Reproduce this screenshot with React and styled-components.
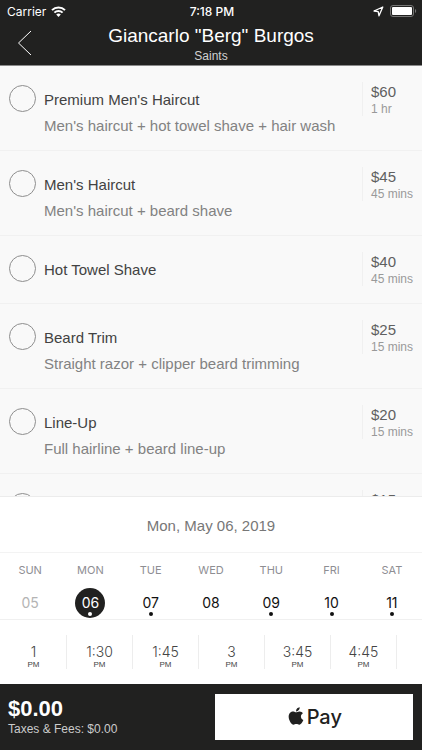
import React, { useState } from 'react';
import styled, { createGlobalStyle } from 'styled-components';
import { FaApple } from 'react-icons/fa';

const services = [
  { id: 'premium', name: "Premium Men's Haircut", about: "Men's haircut + hot towel shave + hair wash", price: 60, duration: '1 hr' },
  { id: 'mens', name: "Men's Haircut", about: "Men's haircut + beard shave", price: 45, duration: '45 mins' },
  { id: 'towel', name: 'Hot Towel Shave', price: 40, duration: '45 mins' },
  { id: 'beard', name: 'Beard Trim', about: 'Straight razor + clipper beard trimming', price: 25, duration: '15 mins' },
  { id: 'lineup', name: 'Line-Up', about: 'Full hairline + beard line-up', price: 20, duration: '15 mins' },
  { id: 'kids', name: "Kid's Haircut", price: 15, duration: '30 mins' },
];

const days = [
  { name: 'SUN', date: '05', past: true },
  { name: 'MON', date: '06', open: true },
  { name: 'TUE', date: '07', open: true },
  { name: 'WED', date: '08' },
  { name: 'THU', date: '09', open: true },
  { name: 'FRI', date: '10', open: true },
  { name: 'SAT', date: '11', open: true },
];

const times = ['1', '1:30', '1:45', '3', '3:45', '4:45', '6'];

const App = () => {
  const [selected, setSelected] = useState([]);
  const [day, setDay] = useState('06');
  const [time, setTime] = useState('');

  const toggle = (id) => {
    setSelected(selected.includes(id) ? selected.filter((s) => s !== id) : [...selected, id]);
  };

  const total = services
    .filter((s) => selected.includes(s.id))
    .reduce((sum, s) => sum + s.price, 0);
  const current = days.find((d) => d.date === day);
  const dayName = current.name[0] + current.name.slice(1).toLowerCase();

  return (
    <Screen>
      <GlobalStyle />
      <Header>
        <StatusBar>
          <Carrier>
            Carrier
            <WifiIcon />
          </Carrier>
          <Clock>7:18 PM</Clock>
          <Indicators>
            <LocationIcon />
            <BatteryIcon />
          </Indicators>
        </StatusBar>
        <NavBar>
          <BackButton type="button" aria-label="Back">
            <svg width="15" height="26" viewBox="0 0 15 26" fill="none" stroke="#fff">
              <path d="M14 1 L1.5 13 L14 25" />
            </svg>
          </BackButton>
          <Heading>
            <Title>Giancarlo "Berg" Burgos</Title>
            <Subtitle>Saints</Subtitle>
          </Heading>
        </NavBar>
      </Header>

      <ServiceList>
        {services.map((service) => (
          <Service key={service.id}>
            <Check
              type="checkbox"
              id={service.id}
              checked={selected.includes(service.id)}
              onChange={() => toggle(service.id)}
            />
            <Details htmlFor={service.id}>
              <Name>{service.name}</Name>
              {service.about && <About>{service.about}</About>}
            </Details>
            <Cost>
              <Price>${service.price}</Price>
              <Duration>{service.duration}</Duration>
            </Cost>
          </Service>
        ))}
      </ServiceList>

      <Schedule>
        <DateTitle>{dayName}, May {day}, 2019</DateTitle>
        <Week>
          {days.map((d) => (
            <Day key={d.date}>
              <DayName>{d.name}</DayName>
              <DayButton
                type="button"
                $active={d.date === day}
                $past={d.past}
                disabled={d.past}
                onClick={() => setDay(d.date)}
              >
                {d.date}
                {d.open && <Dot />}
              </DayButton>
            </Day>
          ))}
        </Week>
        <Times>
          {times.map((t) => (
            <TimeButton key={t} type="button" $active={t === time} onClick={() => setTime(t)}>
              <Hour>{t}</Hour>
              <Meridiem>PM</Meridiem>
            </TimeButton>
          ))}
        </Times>
      </Schedule>

      <Footer>
        <Totals>
          <Total>${total.toFixed(2)}</Total>
          <Taxes>Taxes &amp; Fees: $0.00</Taxes>
        </Totals>
        <PayButton type="button">
          <AppleLogo size={20} aria-hidden="true" />
          Pay
        </PayButton>
      </Footer>
    </Screen>
  );
};

export default App;

const WifiIcon = () => (
  <svg width="15" height="11" viewBox="0 0 15 11" fill="none" stroke="#fff" strokeWidth="2">
    <path d="M1 4.1 A9.2 9.2 0 0 1 14 4.1" />
    <path d="M3.4 6.6 A5.8 5.8 0 0 1 11.6 6.6" />
    <path d="M7.5 11 L5.2 8.6 A3.3 3.3 0 0 1 9.8 8.6 Z" fill="#fff" stroke="none" />
  </svg>
);

const LocationIcon = () => (
  <svg width="11" height="11" viewBox="0 0 11 11" fill="none" stroke="#fff" strokeLinejoin="round">
    <path d="M9.8 1 L1 5 L5.2 5.6 L6 9.8 Z" strokeWidth="1.3" />
  </svg>
);

const BatteryIcon = () => (
  <svg width="27" height="12" viewBox="0 0 27 12">
    <rect x="0.5" y="0.5" width="23" height="11" rx="2.5" fill="none" stroke="#757574" />
    <rect x="2" y="2" width="20" height="8" rx="1" fill="#fff" />
    <path d="M25 4 C26.6 4.6 26.6 7.4 25 8 Z" fill="#757574" />
  </svg>
);

const GlobalStyle = createGlobalStyle`
  * {
    box-sizing: border-box;
  }
  body {
    margin: 0;
    background: #fff;
    font-family: "Liberation Sans", Helvetica, Arial, sans-serif;
  }
  button {
    border: 0;
    padding: 0;
    background: none;
    color: inherit;
    font-family: inherit;
    cursor: pointer;
  }
`;

const Screen = styled.div`
  display: flex;
  flex-direction: column;
  height: 100vh;
`;

const Header = styled.header`
  flex-shrink: 0;
  background: #212120;
  color: #fff;
  border-bottom: 1px solid #8a8a8a;
`;

const StatusBar = styled.div`
  display: grid;
  grid-template-columns: 1fr auto 1fr;
  align-items: center;
  height: 22px;
  padding: 0 5px 0 7px;
  font-family: Inter, sans-serif;
  font-size: 12px;
`;

const Carrier = styled.div`
  display: flex;
  align-items: center;
  gap: 5px;
`;

const Clock = styled.div`
  font-weight: 500;
`;

const Indicators = styled.div`
  display: flex;
  align-items: center;
  justify-content: flex-end;
  gap: 6px;
`;

const NavBar = styled.div`
  display: grid;
  grid-template-columns: 48px 1fr 48px;
  padding-bottom: 2px;
`;

const BackButton = styled.button`
  display: flex;
  align-items: center;
  justify-content: center;
`;

const Heading = styled.div`
  text-align: center;
`;

const Title = styled.h1`
  margin: 0;
  font-size: 19px;
  font-weight: 400;
  line-height: 28px;
`;

const Subtitle = styled.div`
  font-size: 12px;
  line-height: 13px;
  color: #d2d2d2;
`;

const ServiceList = styled.ul`
  flex: 1;
  min-height: 0;
  margin: 0;
  padding: 0;
  list-style: none;
  overflow-y: auto;
  scrollbar-width: none;
  background: #f9f9f9;
`;

const Service = styled.li`
  display: flex;
  align-items: flex-start;
  min-height: 68px;
  padding: 0 0 11px 9px;
  border-bottom: 1px solid #f1f1f1;
`;

const Check = styled.input`
  appearance: none;
  flex-shrink: 0;
  width: 27px;
  height: 27px;
  margin: 19px 8px 0 0;
  border: 1px solid #8e8e8e;
  border-radius: 50%;
  cursor: pointer;

  &:checked {
    background: #212120;
  }
`;

const Details = styled.label`
  flex: 1;
  padding-top: 20px;
  font-size: 15px;
  cursor: pointer;
`;

const Name = styled.div`
  line-height: 27px;
  color: #424242;
`;

const About = styled.div`
  line-height: 26px;
  color: #828282;
`;

const Cost = styled.div`
  width: 60px;
  margin-top: 16px;
  padding-left: 8px;
  border-left: 1px solid #f0f0f0;
`;

const Price = styled.div`
  font-size: 15px;
  line-height: 20px;
  color: #606060;
`;

const Duration = styled.div`
  font-size: 12px;
  line-height: 14px;
  color: #999;
`;

const Schedule = styled.section`
  flex-shrink: 0;
  border-top: 1px solid #ececec;
  background: #fff;
`;

const DateTitle = styled.h2`
  margin: 0;
  padding-top: 3px;
  border-bottom: 1px solid #f3f3f3;
  text-align: center;
  font-size: 15px;
  font-weight: 400;
  line-height: 52px;
  color: #777;
`;

const Week = styled.div`
  display: grid;
  grid-template-columns: repeat(7, 1fr);
  padding-top: 8px;
  border-bottom: 1px solid #f0f0f0;
`;

const Day = styled.div`
  display: flex;
  flex-direction: column;
  align-items: center;
  gap: 9px;
`;

const DayName = styled.div`
  font-family: Inter, sans-serif;
  font-size: 11px;
  line-height: 18px;
  color: #8e8e93;
`;

const DayButton = styled.button`
  display: flex;
  flex-direction: column;
  align-items: center;
  width: 30px;
  height: 30px;
  margin-bottom: 1px;
  padding-top: 6px;
  border-radius: 50%;
  background: ${(props) => (props.$active ? '#212120' : 'none')};
  font-family: Inter, sans-serif;
  font-size: 14px;
  line-height: 18px;
  color: ${(props) => (props.$active ? '#fff' : props.$past ? '#b4b4b4' : '#111')};
`;

const Dot = styled.span`
  width: 4px;
  height: 4px;
  border-radius: 50%;
  background: currentColor;
`;

const Times = styled.div`
  display: flex;
  padding: 15px 1px;
  overflow-x: auto;
  scrollbar-width: none;
`;

const TimeButton = styled.button`
  display: flex;
  flex-direction: column;
  align-items: center;
  flex: 0 0 66px;
  padding-top: 8px;
  border-right: 1px solid #ededed;
  color: ${(props) => (props.$active ? '#000' : '#444')};
`;

const Hour = styled.span`
  font-family: Inter, sans-serif;
  font-size: 14px;
  font-weight: 300;
  line-height: 18px;
`;

const Meridiem = styled.span`
  font-size: 8px;
  line-height: 8px;
`;

const Footer = styled.footer`
  display: flex;
  align-items: center;
  flex-shrink: 0;
  padding: 10px 9px 10px 8px;
  background: #212120;
`;

const Totals = styled.div`
  flex: 1;
  padding-bottom: 2px;
`;

const Total = styled.div`
  font-size: 22px;
  font-weight: 700;
  line-height: 26px;
  color: #fff;
`;

const Taxes = styled.div`
  font-size: 12px;
  line-height: 14px;
  color: #ccc;
`;

const PayButton = styled.button`
  display: flex;
  align-items: center;
  justify-content: center;
  gap: 1px;
  width: 49%;
  height: 46px;
  background: #fff;
  color: #212120;
  font-family: Inter, sans-serif;
  font-size: 20px;
  font-weight: 500;
`;

const AppleLogo = styled(FaApple)`
  margin-bottom: 3px;
`;
